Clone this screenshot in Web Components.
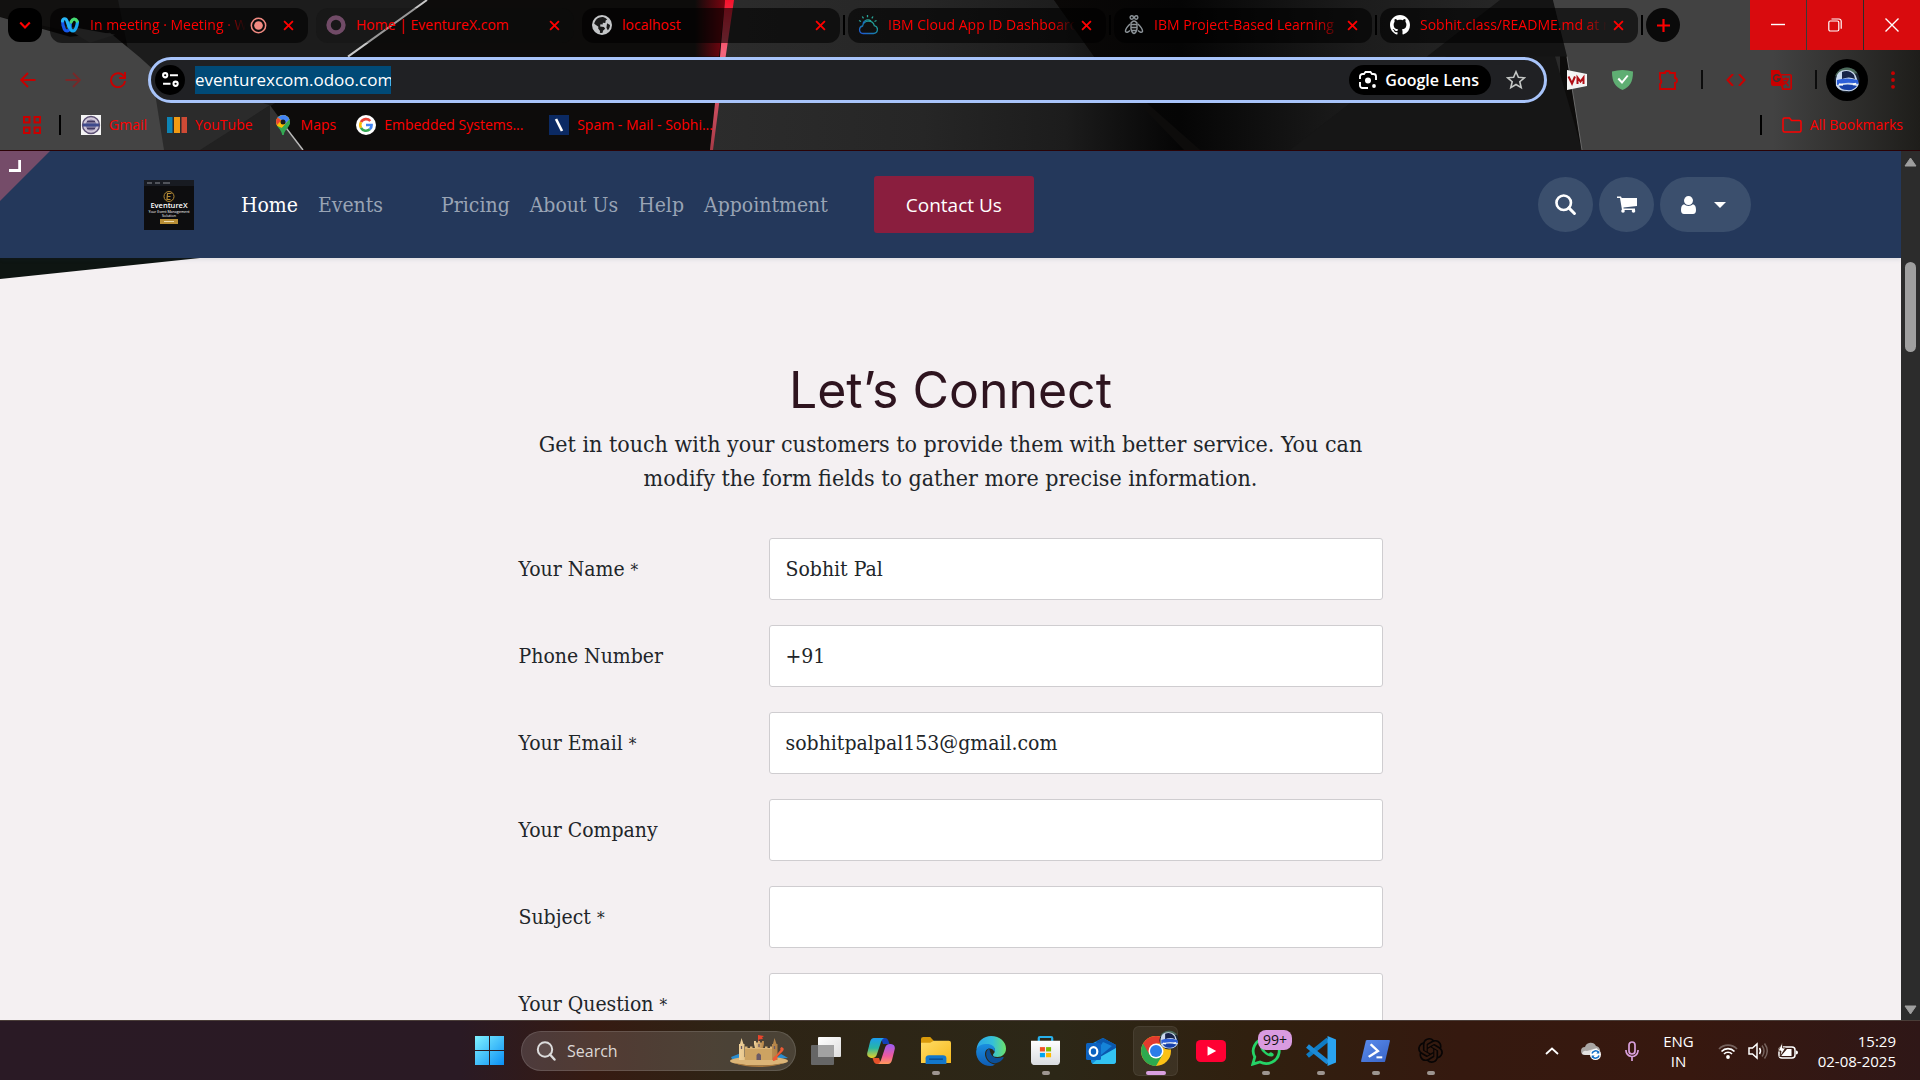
<!DOCTYPE html>
<html lang="en">
<head>
<meta charset="utf-8">
<title>Home | EventureX.com</title>
<style>
  html, body { margin: 0; height: 100%; }
  body { background: #000; font-family: "Open Sans", "Noto Sans", sans-serif; overflow: hidden; }
</style>
</head>
<body>
<desktop-shell></desktop-shell>
<script>
const RESET = `*{box-sizing:border-box}button,input,textarea{font:inherit;color:inherit;border:0;background:none;padding:0;margin:0;outline:0}a{color:inherit;text-decoration:none}svg{display:block}`;

function define(name, css, html) {
  const template = document.createElement('template');
  template.innerHTML = `<style>${RESET}${css}</style>${html}`;
  customElements.define(name, class extends HTMLElement {
    constructor() {
      super();
      this.attachShadow({ mode: 'open' }).append(template.content.cloneNode(true));
    }
  });
}

/* viewBox + drawing for every icon */
const ICONS = {
  chevron: ['0 0 10 10', '<path d="M1 3l4 4 4-4" fill="none" stroke="currentColor" stroke-width="1.8"/>'],
  x: ['0 0 10 10', '<path d="M1 1l8 8M9 1l-8 8" stroke="currentColor" stroke-width="1.7"/>'],
  plus: ['0 0 12 12', '<path d="M6 0v12M0 6h12" stroke="currentColor" stroke-width="2"/>'],
  webex: ['0 0 20 20', '<g fill="none" stroke-width="3.200" stroke-linecap="round"><path d="M2.500 6c.5 6 2 10 4.500 10s3-4 3.500-8" stroke="#1557ea"/><path d="M9.500 10c.5 4 1.500 6 3.500 6s4-4 4.500-9" stroke="#18a9f2"/><path d="M2.500 6c.5-3 3.500-3 4.500 0l2 6" stroke="#27b6f7"/><path d="M11 7c1.500-3.500 4.500-4 6-1" stroke="#46dc72"/></g>'],
  record: ['0 0 18 18', '<circle cx="9" cy="9" r="7.6" fill="none" stroke="#f28b82" stroke-width="1.6"/><circle cx="9" cy="9" r="4.6" fill="#f28b82"/>'],
  odooO: ['0 0 18 18', '<circle cx="9" cy="9" r="6.7" fill="none" stroke="#714b67" stroke-width="4"/>'],
  globe: ['0 0 18 18', '<circle cx="9" cy="9" r="9" fill="#c4c6c8"/><path d="M9 1.8C5 2 2.3 5 1.9 8.8L6 11v1.500l2 2v1.600c1 .2 2 0 2.600-.2V14l1.700-2-1.300-1.500H7.500V8.500h2V6.800h2.200V4.600l1.300-1.100A7 7 0 0 0 9 1.800z" fill="#1a1a1a" transform="rotate(8 9 9)"/><path d="M13.500 7.500l2.700 1.500c0 1.800-.8 3.600-2 4.800l-1.200-2.300z" fill="#1a1a1a"/>'],
  ibmcloud: ['0 0 20 20', '<defs><linearGradient id="ib" x1="0" y1="1" x2="1" y2="0"><stop offset="0" stop-color="#1f57d6"/><stop offset=".6" stop-color="#168a9e"/><stop offset="1" stop-color="#2fb58f"/></linearGradient></defs><g fill="none" stroke="url(#ib)" stroke-width="1.300"><path d="M5 18.500h10.500a4 4 0 0 0 .8-7.900 6 6 0 0 0-11.700.4A3.800 3.800 0 0 0 5 18.500z"/><path d="M5 8.500a5 5 0 0 1 8-2.500"/></g><g stroke="#2aa79a" stroke-width="1.300"><path d="M9.500 0v2.200M4.300 1.500l1.200 1.900M15 1.500l-1.200 1.900M1 5.500l2 1M18.500 5.500l-2 1"/></g>'],
  bee: ['0 0 20 20', '<g fill="none" stroke="#8d9499" stroke-width="1.400"><circle cx="7.800" cy="2.500" r="1.700"/><circle cx="12.200" cy="2.500" r="1.700"/><path d="M7 8q3-4 6 0v6q-1 4-3 4.500Q8 18 7 14zM7 9.500h6M7 12.500h6M7.500 15.500h5"/><path d="M6 9q-5 5-4.500 7.500Q3 18.500 6 15.500M14 9q5 5 4.500 7.500Q17 18.500 14 15.500"/></g>'],
  github: ['0 0 16 16', '<path fill="#fff" d="M8 0C3.580 0 0 3.580 0 8c0 3.540 2.290 6.530 5.470 7.590.4.070.550-.170.550-.380 0-.190-.010-.820-.010-1.490-2.010.370-2.530-.490-2.690-.940-.090-.230-.480-.940-.820-1.130-.280-.150-.680-.520-.010-.530.630-.010 1.080.580 1.230.820.720 1.210 1.870.870 2.330.660.070-.520.280-.870.510-1.070-1.780-.2-3.640-.890-3.640-3.950 0-.870.310-1.590.820-2.150-.080-.2-.360-1.020.080-2.120 0 0 .670-.210 2.200.820.640-.180 1.320-.270 2-.270s1.360.090 2 .270c1.530-1.040 2.200-.820 2.200-.820.440 1.100.160 1.920.080 2.120.510.560.820 1.270.820 2.150 0 3.070-1.870 3.750-3.650 3.950.290.250.540.730.540 1.480 0 1.070-.010 1.930-.010 2.200 0 .210.150.460.550.380A8 8 0 0 0 16 8c0-4.420-3.580-8-8-8z"/>'],
  min: ['0 0 14 14', '<path d="M0 6.500h14" stroke="#fff" stroke-width="1.400"/>'],
  restore: ['0 0 14 14', '<g fill="none" stroke="#fff" stroke-width="1.200"><rect x=".8" y="3" width="10" height="10" rx="1.500"/><path d="M3.500 1h7.500a2.200 2.200 0 0 1 2.200 2.200v7.500"/></g>'],
  winx: ['0 0 14 14', '<path d="M.5 .5l13 13M13.500 .5l-13 13" stroke="#fff" stroke-width="1.400"/>'],
  back: ['0 0 16 16', '<path d="M15.500 8H1.500M8 1L1 8l7 7" fill="none" stroke="currentColor" stroke-width="1.900"/>'],
  fwd: ['0 0 16 16', '<path d="M.5 8h14M8 1l7 7-7 7" fill="none" stroke="currentColor" stroke-width="1.900"/>'],
  reload: ['0 0 16 16', '<path d="M14 4.500A7 7 0 1 0 15 9" fill="none" stroke="currentColor" stroke-width="1.900"/><path d="M15 0v6H9" fill="none" stroke="currentColor" stroke-width="1.900"/>'],
  tune: ['0 0 16 16', '<g fill="none" stroke="#fff" stroke-width="1.900"><circle cx="3" cy="4" r="2"/><path d="M7.500 4H15M1 12h7"/><circle cx="12.800" cy="12" r="2"/></g>'],
  lens: ['0 0 18 18', '<g fill="none" stroke="#fff" stroke-width="1.900"><path d="M1 8V5.500A2.500 2.500 0 0 1 3.500 3H5l1.500-2h5L13 3h1.500A2.500 2.500 0 0 1 17 5.500V9M1 11v3.500A2.500 2.500 0 0 0 3.500 17H9"/></g><circle cx="9" cy="9.500" r="3" fill="#fff"/><circle cx="15" cy="15" r="1.900" fill="#fff"/>'],
  star: ['0 0 20 20', '<path d="M10 1.800l2.400 5.500 6 .5-4.600 3.900 1.400 5.900L10 14.500l-5.200 3.100 1.400-5.900L1.600 7.800l6-.5z" fill="none" stroke="#c4c7c5" stroke-width="1.600"/>'],
  vm: ['0 0 20 20', '<path d="M0 0l20 4v12L0 20z" fill="#f4f4f4"/><path d="M1.500 6.500l3.500 7 3-7M10.500 14V7.500l3 4 3-4V14" fill="none" stroke="#b10f16" stroke-width="2"/>'],
  shield: ['0 0 20 20', '<path d="M0 1.500Q10-1.500 20 1.500C20 12 17 17 10 20 3 17 0 12 0 1.500z" fill="#5fae73"/><path d="M6 8.500l3.500 4 5.500-7" fill="none" stroke="#fff" stroke-width="1.900"/>'],
  puzzle: ['0 0 20 20', '<path d="M2 3h5a2.500 2 0 0 1 5 0h5v5a2 2.500 0 0 1 0 5v6H2v-5a3 3 0 0 0 0-5z" fill="none" stroke="currentColor" stroke-width="1.900"/>'],
  code: ['0 0 20 12', '<path d="M7 0L1.500 6 7 12M13 0l5.500 6L13 12" fill="none" stroke="currentColor" stroke-width="2"/>'],
  translate: ['0 0 21 20', '<path d="M0 0h8l2 4h9a2 2 0 0 1 2 2v12a2 2 0 0 1-2 2h-8l-1-4H2a2 2 0 0 1-2-2z" fill="currentColor"/><path d="M10.500 5.500h8.800v12.800h-6.500l-.9-2.500 2-1.500z" fill="#444"/><path d="M8.500 6A3.300 3.300 0 1 0 9 9H6" fill="none" stroke="#333" stroke-width="1.400"/><path d="M12 9h6M15 7.500V9M17 9c-.6 2.500-2 4-4 5M13.500 11l4 5" fill="none" stroke="currentColor" stroke-width="1.300"/>'],
  train: ['0 0 26 26', '<defs><clipPath id="tc"><circle cx="13" cy="13" r="12.500"/></clipPath></defs><g clip-path="url(#tc)"><path d="M0 0h26v26H0z" fill="#1a2430"/><path d="M0 0h26v6L0 9z" fill="#4c6a5a"/><path d="M2 12Q3 3 12 3q9 0 11 9l2 6q-4 7-12 6-9 0-11-5z" fill="#c9d8ee"/><path d="M8 5q7-3 12 3l1 4q-6-3-13 0z" fill="#172348"/><path d="M3 13q9-3 21 0l.5 4Q12 14 3 18z" fill="#2d5fd8"/><path d="M5 19q8-3 18 0-4 5-10 4-6 0-8-4z" fill="#1740a8"/><path d="M5 17l4 1M19 17.500l3-1" stroke="#fff" stroke-width="1.600"/></g>'],
  dots: ['0 0 4 18', '<g fill="currentColor"><circle cx="2" cy="2.200" r="1.900"/><circle cx="2" cy="9" r="1.900"/><circle cx="2" cy="15.800" r="1.900"/></g>'],
  apps: ['0 0 18 18', '<g fill="none" stroke="currentColor" stroke-width="2"><rect x="1" y="1" width="5.500" height="5.500"/><rect x="11.500" y="1" width="5.500" height="5.500"/><rect x="1" y="11.500" width="5.500" height="5.500"/><rect x="11.500" y="11.500" width="5.500" height="5.500"/></g>'],
  college: ['0 0 20 20', '<path d="M0 0h20v20H0z" fill="#f5f5f5"/><circle cx="10" cy="10" r="8.500" fill="#cfc6d8" stroke="#5b4f74" stroke-width="1.400"/><circle cx="10" cy="10" r="5.500" fill="#8e86a8"/><path d="M2 8.500h16v3H2z" fill="#3f4a8c"/><path d="M6 6.500h8M6 13.500h8" stroke="#443a62" stroke-width="1.300"/>'],
  bars: ['0 0 20 16', '<path d="M0 0h5.500v16H0z" fill="#0d84b5"/><path d="M7 0h6v16H7z" fill="#f29a12"/><path d="M14.500 0H20v16h-5.500z" fill="#cf4a35"/>'],
  maps: ['-3 0 20 20', '<path d="M7 0a7 7 0 0 1 7 7c0 5-5.500 7-6.200 13H6.200C5.500 14 0 12 0 7a7 7 0 0 1 7-7z" fill="#34a853"/><path d="M7 0a7 7 0 0 1 6.500 4.500L6 13 1.300 11A7 7 0 0 1 0 7a7 7 0 0 1 7-7z" fill="#fbbc04"/><path d="M7 0a7 7 0 0 1 6.500 4.500L9 9 4 4 1.500 2.600A7 7 0 0 1 7 0z" fill="#4285f4"/><path d="M1.600 2.500L5 5.500 1 10A7 7 0 0 1 1.600 2.500z" fill="#ea4335"/><path d="M13.500 4.500A7 7 0 0 1 13 10.500L8 17l-3-3z" fill="#34a853"/><circle cx="7" cy="7" r="2.500" fill="#1a1a1a"/>'],
  google: ['0 0 20 20', '<circle cx="10" cy="10" r="10" fill="#fff"/><g fill="none" stroke-width="2.600"><path d="M14.300 6A5.700 5.700 0 0 0 5 7.200" stroke="#ea4335"/><path d="M5 7.200a5.700 5.700 0 0 0 0 5.600" stroke="#fbbc05"/><path d="M5 12.800a5.700 5.700 0 0 0 8.800 1.500" stroke="#34a853"/><path d="M13.800 14.300A5.500 5.500 0 0 0 15.600 10H10" stroke="#4285f4"/></g>'],
  slash: ['0 0 20 20', '<path d="M0 0h20v20H0z" fill="#0b2a63"/><path d="M7 4l6 12" stroke="#fff" stroke-width="2.600"/>'],
  folder: ['0 0 20 16', '<path d="M1 2.500A1.500 1.500 0 0 1 2.500 1H7.500l2 2.500h8A1.500 1.500 0 0 1 19 5v8.500a1.500 1.500 0 0 1-1.500 1.500h-15A1.500 1.500 0 0 1 1 13.500z" fill="none" stroke="currentColor" stroke-width="1.500"/>'],
  search: ['0 0 20 20', '<circle cx="8.300" cy="8.300" r="6.900" fill="none" stroke="currentColor" stroke-width="2.500"/><path d="M13.200 13.200l5.300 5.300" stroke="currentColor" stroke-width="2.800" stroke-linecap="round"/>'],
  cart: ['0 0 20 17', '<path d="M0 .5h4l.7 1.500H20v8L6.500 11.500v1H18v1.500H5L3 2H0z" fill="currentColor"/><circle cx="6" cy="15" r="1.800" fill="currentColor"/><circle cx="16.500" cy="15" r="1.800" fill="currentColor"/>'],
  user: ['0 0 15 18', '<circle cx="7.500" cy="4.600" r="4.500" fill="currentColor"/><path d="M3 8.300a6.500 6.500 0 0 0 9 0c2 .5 3 2.500 3 5.700 0 2.500-1 4-3 4H3c-2 0-3-1.500-3-4 0-3.200 1-5.200 3-5.700z" fill="currentColor"/>'],
  caret: ['0 0 12 6', '<path d="M0 0h12L6 6z" fill="currentColor"/>'],
  windows: ['0 0 29 29', '<defs><linearGradient id="wn" gradientUnits="userSpaceOnUse" x1="0" y1="0" x2="29" y2="29"><stop offset="0" stop-color="#80f2ff"/><stop offset="1" stop-color="#0a8ff5"/></linearGradient></defs><path d="M0 0h14v14H0zM15 0h14v14H15zM0 15h14v14H0zM15 15h14v14H15z" fill="url(#wn)"/>'],
  find: ['0 0 20 20', '<circle cx="9" cy="8.500" r="7.200" fill="#ffffff18" stroke="#dcdcdc" stroke-width="2"/><path d="M14 13.500l4.500 5" stroke="#dcdcdc" stroke-width="2.400" stroke-linecap="round"/>'],
  castle: ['0 0 60 32', '<defs><linearGradient id="cs" x1="0" x2="1"><stop offset="0" stop-color="#f0d29a"/><stop offset="1" stop-color="#b08043"/></linearGradient></defs><path d="M2 22l10-4 4 6H3zM46 24l6-5 7 4z" fill="#2a8dd0"/><ellipse cx="30" cy="26" rx="29" ry="4.500" fill="#dcb577"/><path d="M5 28q25 5 50 0-10 4-25 4T5 28z" fill="#a9783c"/><path d="M16 13h28v12H16z" fill="#cda362"/><path d="M16 14v-2.500h2.500V13H21v-1.500h2.500V13H26v-1.500h2.500V13H31v-1.500h2.500V13H36v-1.500h2.500V13H41v-1.500h3V14z" fill="#dcb577"/><path d="M10 9h1l1.500-6L14.500 9h1v16h-5.500zM43 9h1l1.500-6L47.500 9h1v16H43z" fill="url(#cs)"/><path d="M25 6h2v1.500h2V6h2v1.500h2V6h2v3l-1 4h-8l-1-4z" fill="url(#cs)"/><path d="M27.500 25v-5q2-3.500 4.500 0v5z" fill="#6b5a66"/><path d="M30 9v3M12.500 11v3M45.500 11v3" stroke="#6b5a66" stroke-width="1.300"/><path d="M29 6V0l6 1-2 1.500 1 1.500-4.300.5V6z" fill="#e8452c"/><path d="M52.500 12q3.500 1 1.500 4l-6 6q1 3-4 4-1-4 2.500-5l5-6q-1-2 1-3z" fill="#ee5a34"/>'],
  taskview: ['0 0 30 28', '<defs><linearGradient id="tv" x1="0" y1="0" x2="1" y2="1"><stop offset="0" stop-color="#fff"/><stop offset="1" stop-color="#dedede"/></linearGradient></defs><rect x="7" y="0" width="23" height="20" rx="1" fill="url(#tv)"/><rect x="0" y="8" width="23" height="20" rx="1" fill="#666"/><path d="M7 8h16v12H7z" fill="#a2a2a2"/>'],
  copilot: ['0 0 28 26', '<defs><linearGradient id="c1" x1="0" y1="0" x2="0" y2="1"><stop offset="0" stop-color="#1b9cf0"/><stop offset=".5" stop-color="#28b6a4"/><stop offset="1" stop-color="#e9cf24"/></linearGradient><linearGradient id="c2" x1="0" y1="0" x2="0" y2="1"><stop offset="0" stop-color="#9a5cf5"/><stop offset=".6" stop-color="#f05a9c"/><stop offset="1" stop-color="#ff9a5c"/></linearGradient></defs><path d="M14 0h4q2.500 0 3.500 3l1 3H16z" fill="#1440b8"/><path d="M7 0h10q-2 1-3 4l-4 12q-1 4-5 4H4q-5-1-3.500-6L3 4q1-4 4-4z" fill="url(#c1)"/><path d="M14 26h-4q-2.500 0-3.500-3l-1-3H12z" fill="#e5512a"/><path d="M21 26H11q2-1 3-4l4-12q1-4 5-4h1q5 1 3.500 6L25 22q-1 4-4 4z" fill="url(#c2)"/>'],
  explorer: ['0 0 26 28', '<defs><linearGradient id="ex" x1="0" y1="0" x2="1" y2="1"><stop offset="0" stop-color="#ffdc66"/><stop offset="1" stop-color="#f7b91c"/></linearGradient></defs><path d="M0 2q0-2 2-2h6l3 4v5H0z" fill="#d99a0b"/><path d="M0 6l8 0 3-2h13q2 0 2 2v21H0z" fill="url(#ex)"/><path d="M4 28v-6q0-3 3-3h12q3 0 3 3v6z" fill="#1277cc"/><path d="M7 23h12" stroke="#0a5093" stroke-width="1.600"/>'],
  edge: ['0 0 30 30', '<defs><linearGradient id="e1" x1="0" x2="1"><stop offset="0" stop-color="#2aa6e8"/><stop offset=".55" stop-color="#35c0d8"/><stop offset="1" stop-color="#6be26a"/></linearGradient><linearGradient id="e2" x1="0" y1="0" x2="0" y2="1"><stop offset="0" stop-color="#1a8ee0"/><stop offset="1" stop-color="#0f5cb4"/></linearGradient></defs><path d="M.5 13C1.500 5 8 0 15 0c9 0 15 6 15 12.500C30 18 26 21 21.500 21c-3.500 0-4.500-1-4.500-2 0-1.500 2-2 2-4.500 0-3-3-5-6.500-5-5 0-9 1-12 3.500z" fill="url(#e1)"/><path d="M.2 15C1 9.500 6 8 11 8c4.500 0 8 2.500 8 6 0 .8-.2 1.500-.5 2-1-2.500-3-3.500-5-3.500-3.500 0-5.500 4-4 8.500S15 28 19 28.500C17.500 29.500 16 30 14.500 30 6 30-.500 23 .2 15z" fill="url(#e2)"/><path d="M13 12.500c-2.500 1.500-3.500 4.500-2.500 8 1.500 5 6 7.500 10 6.500 3-.7 5.500-2.500 7-5 .3-1-.3-1.300-1-1-4 2-9 1.300-11-2-1.500-2.500-1.500-5-2.500-6.500z" fill="#0c4f97"/>'],
  store: ['0 0 26 30', '<defs><linearGradient id="st" x1="0" y1="0" x2="0" y2="1"><stop offset="0" stop-color="#fff"/><stop offset="1" stop-color="#d9dce0"/></linearGradient></defs><path d="M7 6V2q0-1 1-1h10q1 0 1 1v4" fill="none" stroke="#27b0ea" stroke-width="2"/><path d="M0 5h26v21q0 4-4 4H4q-4 0-4-4z" fill="url(#st)"/><path d="M8 11.500h4.500V16H8z" fill="#f25022"/><path d="M13.500 11.500H18V16h-4.500z" fill="#7fba00"/><path d="M8 17.500h4.500V22H8z" fill="#00a4ef"/><path d="M13.500 17.500H18V22h-4.500z" fill="#ffb900"/>'],
  outlook: ['0 0 30 26', '<path d="M5 6L17 0l13 7v16q0 3-3 3H8q-3 0-3-3z" fill="#1490df"/><path d="M10 3.500L17 0l13 7v3L15 20z" fill="#0a57ae"/><path d="M30 10v13q0 3-3 3H6l8-7z" fill="#33c3f2"/><path d="M17 4l9 4-11 9V7z" fill="#1583d8"/><rect y="5" width="15" height="17" rx="1.500" fill="#0d62c0"/><ellipse cx="7.500" cy="13.500" rx="3.800" ry="4.400" fill="none" stroke="#fff" stroke-width="2.200"/>'],
  chrome: ['0 0 28 28', '<circle cx="14" cy="14" r="14" fill="#fbc116"/><path d="M1.900 7A14 14 0 0 0 14 28l6.100-10.500L14 14z" fill="#2da94f"/><path d="M1.900 7A14 14 0 0 1 26.100 7H14l-6 10.500z" fill="#e33b2e"/><circle cx="14" cy="14" r="7" fill="#fff"/><circle cx="14" cy="14" r="5.600" fill="#2b7de9"/>'],
  youtube: ['0 0 26 21', '<rect width="26" height="21" rx="4" fill="#ff0033"/><path d="M10 6l7.500 4.500L10 15z" fill="#fff"/>'],
  whatsapp: ['0 0 30 30', '<path d="M1.800 28.200l2-7.200A13 12.500 0 1 1 9 26z" fill="none" stroke="#25d366" stroke-width="2.800"/><path d="M10 8c-2 2-1 5 2.500 8.500s7.500 5 9.500 3.500c1.500-1.500.5-2.500-1.500-3.500-1.500-.8-1.800 1-3 1-1.500-.5-4-3-4.500-4.500 0-1 1.500-1.500 1-3s-2-3-4-2z" fill="#25d366"/>'],
  vscode: ['0 0 30 30', '<path d="M22 3.500L1.500 20" stroke="#0f7cc4" stroke-width="4.600"/><path d="M1.500 10L22 26.500" stroke="#1b8ad6" stroke-width="4.600"/><path d="M21.500 0L30 3.500v23L21.500 30z" fill="#2aa3f0"/>'],
  powershell: ['0 0 30 26', '<defs><linearGradient id="ps" x1="0" y1="0" x2="1" y2="1"><stop offset="0" stop-color="#5b8def"/><stop offset="1" stop-color="#3863c4"/></linearGradient></defs><path d="M5 1Q5.300 0 6.500 0H29q1.200 0 1 1l-5 24q-.3 1-1.500 1H1q-1.200 0-1-1z" fill="url(#ps)"/><path d="M10 5l7.500 8L8 20" fill="none" stroke="#fff" stroke-width="2.600"/><path d="M16 20.500h6" stroke="#fff" stroke-width="2.400"/>'],
  openai: ['0 0 24 24', '<path fill="#080505" d="M22.2819 9.8211a5.9847 5.9847 0 0 0-.5157-4.9108 6.0462 6.0462 0 0 0-6.5098-2.9A6.0651 6.0651 0 0 0 4.9807 4.1818a5.9847 5.9847 0 0 0-3.9977 2.9 6.0462 6.0462 0 0 0 .7427 7.0966 5.98 5.98 0 0 0 .511 4.9107 6.051 6.051 0 0 0 6.5146 2.9001A5.9847 5.9847 0 0 0 13.2599 24a6.0557 6.0557 0 0 0 5.7718-4.2058 5.9894 5.9894 0 0 0 3.9977-2.9001 6.0557 6.0557 0 0 0-.7475-7.0729zm-9.022 12.6081a4.4755 4.4755 0 0 1-2.8764-1.0408l.1419-.0804 4.7783-2.7582a.7948.7948 0 0 0 .3927-.6813v-6.7369l2.02 1.1686a.071.071 0 0 1 .038.052v5.5826a4.504 4.504 0 0 1-4.4945 4.4944zm-9.6607-4.1254a4.4708 4.4708 0 0 1-.5346-3.0137l.142.0852 4.783 2.7582a.7712.7712 0 0 0 .7806 0l5.8428-3.3685v2.3324a.0804.0804 0 0 1-.0332.0615L9.74 19.9502a4.4992 4.4992 0 0 1-6.1408-1.6464zM2.3408 7.8956a4.485 4.485 0 0 1 2.3655-1.9728V11.6a.7664.7664 0 0 0 .3879.6765l5.8144 3.3543-2.0201 1.1685a.0757.0757 0 0 1-.071 0l-4.8303-2.7865A4.504 4.504 0 0 1 2.3408 7.872zm16.5963 3.8558L13.1038 8.364 15.1192 7.2a.0757.0757 0 0 1 .071 0l4.8303 2.7913a4.4944 4.4944 0 0 1-.6765 8.1042v-5.6772a.79.79 0 0 0-.407-.667zm2.0107-3.0231l-.142-.0852-4.7735-2.7818a.7759.7759 0 0 0-.7854 0L9.409 9.2297V6.8974a.0662.0662 0 0 1 .0284-.0615l4.8303-2.7866a4.4992 4.4992 0 0 1 6.6802 4.66zM8.3065 12.863l-2.02-1.1638a.0804.0804 0 0 1-.038-.0567V6.0742a4.4992 4.4992 0 0 1 7.3757-3.4537l-.142.0805L8.704 5.459a.7948.7948 0 0 0-.3927.6813zm1.0976-2.3654l2.602-1.4998 2.6069 1.4998v2.9994l-2.5974 1.4997-2.6067-1.4997Z"/>'],
  up: ['0 0 14 8', '<path d="M1 7l6-5.500L13 7" fill="none" stroke="#fff" stroke-width="1.800"/>'],
  cloud: ['0 0 20 18', '<path d="M4 13a4 4 0 0 1 0-8 6 6 0 0 1 11-1 5 5 0 0 1 2 9z" fill="#a9a6a4"/><path d="M1 12q1-4 5-3l10-3 2 7H4z" fill="#e4e2e1"/><circle cx="14.500" cy="12.500" r="5.500" fill="#fff"/><path d="M11 11.500a3.600 3.600 0 0 1 6.500-1M18 13.500a3.600 3.600 0 0 1-6.500 1" fill="none" stroke="#1470c8" stroke-width="1.500"/><path d="M18.300 8.500v3h-3zM10.700 16.500v-3h3z" fill="#1470c8"/>'],
  mic: ['0 0 14 20', '<g fill="none" stroke="#d9a0dd" stroke-width="1.700"><rect x="4" y="1" width="6" height="12" rx="3"/><path d="M1 9a6 6 0 0 0 12 1V9M7 16v4"/></g>'],
  wifi: ['0 0 20 16', '<g fill="none" stroke-width="1.700"><path d="M1 6a12.500 12.500 0 0 1 18 0" stroke="#75625d"/><path d="M3.500 8.500a9 9 0 0 1 13 0M6 11a5.500 5.500 0 0 1 8 0" stroke="#fff"/></g><circle cx="10" cy="14" r="1.900" fill="#fff"/>'],
  volume: ['0 0 20 18', '<path d="M1 6h3.500L9 2v14l-4.500-4H1z" fill="none" stroke="#fff" stroke-width="1.500"/><path d="M11.500 6q2 3 0 6" fill="none" stroke="#fff" stroke-width="1.500"/><path d="M14 3.500q4 5.500 0 11M16.500 1.500q5.500 7.500 0 15" fill="none" stroke="#75625d" stroke-width="1.500"/>'],
  battery: ['0 0 20 18', '<rect x="1" y="5" width="16" height="11" rx="3" fill="none" stroke="#fff" stroke-width="1.500"/><path d="M18 8.500q2 0 2 2t-2 2z" fill="#fff"/><path d="M3 14l6-7h4.500v7z" fill="#fff"/><path d="M4.500 0L0 9h3l-1 6 5.500-9H4.500z" fill="#fff" stroke="#35190f" stroke-width=".8"/>'],
  corner: ['0 0 13 12', '<path d="M11.500 0v10.500H0" fill="none" stroke="#fff" stroke-width="3"/>'],
  tri: ['0 0 13 10', '<path d="M6.500 1l5.500 8H1z" fill="#9f9f9f" stroke="#9f9f9f" stroke-linejoin="round"/>'],
  logo: ['0 0 50 50', '<path d="M0 0h50v50H0z" fill="#0d0d0f"/><path d="M0 0h50v6H0z" fill="#181b22"/><path d="M3 3h5M11 3h5M19 3h7" stroke="#8a8d94" stroke-width="1.200"/><g font-family="Open Sans, sans-serif" fill="#fff" text-anchor="middle"><text x="25" y="28" font-size="7.500" font-weight="600">EventureX</text><text x="25" y="33" font-size="3.600">Your Event Management</text><text x="25" y="37" font-size="3.600">Solution</text></g><circle cx="25" cy="16.500" r="5" fill="none" stroke="#b58a35"/><path d="M27.500 13.500h-4l-.5 6h3.500M23 16.500h3.500" fill="none" stroke="#b58a35" stroke-width="1.200"/><path d="M16 39h18v5H16z" fill="#b98e35"/><path d="M20 41.500h10" stroke="#eedcae"/>']
};

customElements.define('ui-icon', class extends HTMLElement {
  connectedCallback() {
    if (this.shadowRoot) return;
    const [box, art] = ICONS[this.getAttribute('name')];
    const w = this.getAttribute('w') || 20, h = this.getAttribute('h') || w;
    this.attachShadow({ mode: 'open' }).innerHTML =
      `<style>:host{display:block;flex:none}svg{display:block}</style><svg width="${w}" height="${h}" viewBox="${box}" preserveAspectRatio="none" aria-hidden="true">${art}</svg>`;
  }
});

/* ---------- browser chrome ---------- */
define('theme-art', `:host{display:block;overflow:hidden}svg{width:100%;height:100%}`, `
<svg viewBox="0 0 1920 151" preserveAspectRatio="none" aria-hidden="true">
  <defs>
    <linearGradient id="g1" x1="0" x2="1"><stop offset="0" stop-color="#2c2c2c"/><stop offset=".45" stop-color="#262626"/><stop offset=".75" stop-color="#1c1c1c"/><stop offset="1" stop-color="#040404"/></linearGradient>
    <linearGradient id="g2" x1="0" x2="1"><stop offset="0" stop-color="#0a0807"/><stop offset=".25" stop-color="#050505"/><stop offset=".6" stop-color="#1c1c1c"/><stop offset="1" stop-color="#2a2a2a"/></linearGradient>
    <linearGradient id="g3" x1="0" x2="1"><stop offset="0" stop-color="#424242"/><stop offset=".6" stop-color="#424242"/><stop offset="1" stop-color="#1e1d1a"/></linearGradient>
    <linearGradient id="glow" x1="0" x2="1"><stop offset="0" stop-color="#a00010" stop-opacity="0"/><stop offset="1" stop-color="#a00010" stop-opacity=".75"/></linearGradient>
    <linearGradient id="red" x1="0" y1="0" x2="0" y2="1"><stop offset="0" stop-color="#f5122c"/><stop offset=".35" stop-color="#f4647c"/><stop offset="1" stop-color="#a83a46"/></linearGradient>
  </defs>
  <path d="M0 0h1920v151H0z" fill="#0d0c0b"/>
  <path d="M0 0h250L120 42 0 17z" fill="#121110"/>
  <path d="M118 0h309l-78 57-79 50 33 44H163L130 60z" fill="#1c1c1c"/>
  <path d="M150 68l120 38-68 45h-39z" fill="#2b2b2b"/>
  <path d="M270 106l33 45h-34z" fill="#333"/>
  <path d="M270 106l-70 45h70z" fill="#212121"/>
  <path d="M0 17l70 20 40-4 30 25 11 10 13 83H0z" fill="#444"/>
  <path d="M60 25l55 10-25 8z" fill="#505050"/>
  <path d="M427 0l-79 57" stroke="#c8c8c8" stroke-width="2"/>
  <path d="M284 126l19 25" stroke="#bbb" stroke-width="1.500"/>
  <path d="M729 0h325l40 57 90 94H710z" fill="url(#g1)"/>
  <path d="M1054 0h506v151H1200L1094 57z" fill="url(#g2)"/>
  <path d="M1355 100l-65 51h292l-40-140z" fill="#161616"/>
  <path d="M1500 0h53l14 57h-140z" fill="#141414"/>
  <path d="M1553 0h367v151h-338l-15-94z" fill="url(#g3)"/>
  <path d="M1567 57l15 94" stroke="#6a6a6a"/>
  <path d="M695 0h30l-6 57h-24z" fill="url(#glow)"/>
  <path d="M725 0h9l-12 82-9 69h-3l10-94z" fill="url(#red)"/>
</svg>`);

define('browser-tab', `
:host{display:flex;align-items:center;flex:0 1 258px;min-width:0;height:35px;padding:0 14px 0 10px;border-radius:12px;background:#0009;color:#f00;font-size:14px}
:host([active]){background:#0d0c0b40}
a{flex:1;min-width:0;margin-left:10px;white-space:nowrap;overflow:hidden;line-height:20px;-webkit-mask:linear-gradient(90deg,#000 calc(100% - 24px),transparent)}
:host([short]) a{-webkit-mask:none}
button{display:flex;padding:0;margin-left:6px}
::slotted([slot=end]){margin:0 10px 0 4px}`,
`<slot name="icon"></slot><a href="#"><slot></slot></a><slot name="end"></slot><button aria-label="Close tab"><ui-icon name="x" w="11"></ui-icon></button>`);

define('tab-strip', `
:host{display:flex;height:50px;padding-left:8px}
.tabs{display:flex;align-items:center;flex:1;min-width:0;gap:8px}
.round{display:flex;flex:none;width:34px;height:34px;border-radius:12px;background:#000;color:#f00;align-items:center;justify-content:center}
.add{border-radius:50%;background:#0a0a0a}
.cut{width:2px;height:20px;background:#000;margin:0 -5px;flex:none}
.win{display:flex;gap:1px;flex:none}
.win button{width:56px;height:50px;background:#d90b0e;display:flex;align-items:center;justify-content:center}
`, `
<div class="tabs">
  <button class="round" aria-label="Search tabs"><ui-icon name="chevron" w="12"></ui-icon></button>
  <browser-tab><ui-icon slot="icon" name="webex" w="20"></ui-icon>In meeting · Meeting · Webex<ui-icon slot="end" name="record" w="17"></ui-icon></browser-tab>
  <browser-tab active short><ui-icon slot="icon" name="odooO" w="20"></ui-icon>Home | EventureX.com</browser-tab>
  <browser-tab short><ui-icon slot="icon" name="globe" w="20"></ui-icon>localhost</browser-tab>
  <span class="cut"></span>
  <browser-tab><ui-icon slot="icon" name="ibmcloud" w="20"></ui-icon>IBM Cloud App ID Dashboard</browser-tab>
  <span class="cut"></span>
  <browser-tab><ui-icon slot="icon" name="bee" w="20"></ui-icon>IBM Project-Based Learning</browser-tab>
  <span class="cut"></span>
  <browser-tab><ui-icon slot="icon" name="github" w="20"></ui-icon>Sobhit.class/README.md at main</browser-tab>
  <span class="cut"></span>
  <button class="round add" aria-label="New tab"><ui-icon name="plus" w="13"></ui-icon></button>
</div>
<div class="win"><button aria-label="Minimize"><ui-icon name="min" w="14"></ui-icon></button><button aria-label="Restore"><ui-icon name="restore" w="14"></ui-icon></button><button aria-label="Close"><ui-icon name="winx" w="14"></ui-icon></button></div>`);

define('tool-bar', `
:host{display:flex;align-items:center;height:59px;padding:0 25px 0 20px;color:#c80000}
button{display:flex;align-items:center;justify-content:center;flex:none}
.nav{display:flex;gap:29px;margin-right:22px}
.nav .off{opacity:.4}
.omni{flex:1;min-width:0;height:46px;border:3px solid #a8c4fa;border-radius:23px;background:#202124;display:flex;align-items:center;padding:0 18px 0 4px}
.tune{width:30px;height:30px;border-radius:50%;background:#000;margin-right:10px}
input{width:196px;height:28px;background:#004a77;color:#fff;font-size:17px}
.gap{flex:1}
.lens{height:30px;border-radius:15px;background:#000;color:#fff;font-weight:600;font-size:16px;padding:0 12px 0 10px;gap:8px;margin-right:15px}
.ext{display:flex;align-items:center;gap:25px;margin-left:20px}
.bar{width:2px;height:19px;background:#0c0c0c;margin:0 -2px}
.me{width:42px;height:42px;border-radius:50%;background:#000}
.ext .bar+.me{margin:0 -2px 0 -14px}
`, `
<div class="nav"><button aria-label="Back"><ui-icon name="back" w="16"></ui-icon></button><button class="off" aria-label="Forward"><ui-icon name="fwd" w="16"></ui-icon></button><button aria-label="Reload"><ui-icon name="reload" w="16"></ui-icon></button></div>
<div class="omni"><button class="tune" aria-label="Site information"><ui-icon name="tune" w="17"></ui-icon></button><input aria-label="Address" value="eventurexcom.odoo.com"><span class="gap"></span><button class="lens"><ui-icon name="lens" w="18"></ui-icon>Google Lens</button><button aria-label="Bookmark this tab"><ui-icon name="star" w="20"></ui-icon></button></div>
<div class="ext"><button aria-label="VM extension"><ui-icon name="vm" w="20"></ui-icon></button><button aria-label="AdGuard"><ui-icon name="shield" w="21" h="20"></ui-icon></button><button aria-label="Extensions"><ui-icon name="puzzle" w="20"></ui-icon></button><span class="bar"></span><button aria-label="Code"><ui-icon name="code" w="20" h="12"></ui-icon></button><button aria-label="Translate"><ui-icon name="translate" w="21" h="20"></ui-icon></button><span class="bar"></span><button class="me" aria-label="Profile"><ui-icon name="train" w="26"></ui-icon></button><button aria-label="Menu"><ui-icon name="dots" w="4" h="18"></ui-icon></button></div>`);

define('book-mark', `:host{display:block;color:#f00;font-size:14px}:host([long]){min-width:173px}a{display:flex;align-items:center;gap:8px;line-height:20px;white-space:nowrap}`,
`<a href="#"><slot name="icon"></slot><slot></slot></a>`);

define('bookmark-bar', `
:host{display:flex;align-items:center;height:32px;padding:0 17px 0 23px;gap:20px;color:#c80000}
.bar{width:2px;height:20px;background:#000}
.gap{flex:1}.r{display:flex;align-items:center;gap:20px}
.l{display:flex;align-items:center;gap:18px}`, `
<div class="l"><button aria-label="Apps"><ui-icon name="apps" w="18"></ui-icon></button><span class="bar"></span></div>
<book-mark><ui-icon slot="icon" name="college" w="20"></ui-icon>Gmail</book-mark>
<book-mark><ui-icon slot="icon" name="bars" w="20" h="16"></ui-icon>YouTube</book-mark>
<book-mark><ui-icon slot="icon" name="maps" w="20"></ui-icon>Maps</book-mark>
<book-mark long><ui-icon slot="icon" name="google" w="20"></ui-icon>Embedded Systems...</book-mark>
<book-mark long><ui-icon slot="icon" name="slash" w="20"></ui-icon>Spam - Mail - Sobhi...</book-mark>
<span class="gap"></span>
<div class="r"><span class="bar"></span><book-mark><ui-icon slot="icon" name="folder" w="20" h="16"></ui-icon>All Bookmarks</book-mark></div>`);

define('browser-chrome', `
:host{display:grid;height:151px;flex:none;border-bottom:1px solid #2a0205;overflow:hidden}
theme-art,.rows{grid-area:1/1;min-width:0;min-height:0}
.rows{display:flex;flex-direction:column}`,
`<theme-art></theme-art><div class="rows"><tab-strip></tab-strip><tool-bar></tool-bar><bookmark-bar></bookmark-bar></div>`);

/* ---------- web page ---------- */
define('site-nav', `
:host{display:flex;align-items:center;height:107px;background:#24385b;padding:0 150px 0 144px;color:#fff;position:relative;z-index:1;box-shadow:0 2px 4px #24385b18;font-family:"DejaVu Serif Condensed","DejaVu Serif",serif}
.corner{position:absolute;left:0;top:0;width:50px;height:50px;background:#754c69;clip-path:polygon(0 0,100% 0,0 100%);padding:9px}
nav{display:flex;align-items:center;gap:20px;margin-left:47px;font-size:21px;color:#99a4b5;white-space:nowrap}
.on{color:#fff}.sp{margin-right:38px}
.cta{margin-left:46px;height:57px;width:160px;border-radius:3px;background:#8a1e3e;font-family:"Open Sans",sans-serif;font-size:19px;white-space:nowrap}
.acts{display:flex;gap:6px;margin-left:auto}
.acts button{height:55px;min-width:55px;border-radius:28px;background:#3b4f6d;display:flex;align-items:center;justify-content:center;gap:18px}
.acts .wide{width:91px;padding-right:5px}`, `
<div class="corner"><ui-icon name="corner" w="12"></ui-icon></div>
<a href="#" aria-label="EventureX"><ui-icon name="logo" w="50"></ui-icon></a>
<nav><a class="on" href="#">Home</a><a class="sp" href="#">Events</a><a href="#">Pricing</a><a href="#">About Us</a><a href="#">Help</a><a href="#">Appointment</a></nav>
<button class="cta">Contact Us</button>
<div class="acts"><button aria-label="Search"><ui-icon name="search" w="21"></ui-icon></button><button aria-label="Cart"><ui-icon name="cart" w="20" h="17"></ui-icon></button><button class="wide" aria-label="Account"><ui-icon name="user" w="15" h="18"></ui-icon><ui-icon name="caret" w="12" h="6"></ui-icon></button></div>`);

customElements.define('form-field', class extends HTMLElement {
  connectedCallback() {
    if (this.shadowRoot) return;
    const root = this.attachShadow({ mode: 'open' });
    const type = this.getAttribute('type') || 'text';
    const star = this.hasAttribute('required') ? ' <span>*</span>' : '';
    const control = type === 'textarea' ? '<textarea id="c"></textarea>' : `<input id="c" type="${type}">`;
    root.innerHTML = `<style>${RESET}
      :host{display:flex;align-items:flex-start;font-size:21px;color:#212529}
      label{width:250px;flex:none;line-height:62px}span{font-size:17px;line-height:20px}
      input,textarea{flex:1;min-width:0;height:62px;border:1px solid #cfcdd0;border-radius:3px;background:#fff;padding:0 16px}
      textarea{height:160px;padding:16px;resize:none}
    </style><label for="c">${this.getAttribute('label')}${star}</label>${control}`;
    root.getElementById('c').value = this.getAttribute('value') || '';
  }
});

define('contact-section', `
:host{display:block;background:#f4f0f2;color:#212529;font-family:"DejaVu Serif Condensed","DejaVu Serif",serif}
.slant{width:200px;height:21px;background:#0e1512;clip-path:polygon(0 0,100% 0,0 100%)}
.in{max-width:864px;margin:0 auto;padding-top:78px}
h2{margin:0;text-align:center;font:400 50px/66px Inter,sans-serif;color:#2e141f}
p{margin:4px 0 43px;text-align:center;font-size:23px;line-height:34px}
form{display:flex;flex-direction:column;gap:25px}`, `
<div class="slant"></div>
<div class="in"><h2>Let’s Connect</h2>
<p>Get in touch with your customers to provide them with better service. You can modify the form fields to gather more precise information.</p>
<form>
<form-field label="Your Name" required value="Sobhit Pal"></form-field>
<form-field label="Phone Number" type="tel" value="+91"></form-field>
<form-field label="Your Email" required type="email" value="sobhitpalpal153@gmail.com"></form-field>
<form-field label="Your Company"></form-field>
<form-field label="Subject" required></form-field>
<form-field label="Your Question" required type="textarea"></form-field>
</form></div>`);

define('scroll-rail', `
:host{display:flex;flex-direction:column;align-items:center;width:19px;flex:none;background:#2c2c2c;padding:6px 0 5px}
.thumb{width:11px;height:90px;border-radius:6px;background:#9f9f9f;margin-top:95px}
.gap{flex:1}.dn{transform:rotate(180deg)}`,
`<ui-icon name="tri" w="13" h="10"></ui-icon><div class="thumb"></div><div class="gap"></div><ui-icon class="dn" name="tri" w="13" h="10"></ui-icon>`);

define('page-view', `
:host{display:flex;flex:1;min-height:0;overflow:hidden}
main{flex:1;min-width:0;overflow:hidden;background:#f4f0f2}`,
`<main><site-nav></site-nav><contact-section></contact-section></main><scroll-rail></scroll-rail>`);

/* ---------- taskbar ---------- */
define('task-app', `
:host{display:block;width:45px;flex:none}
button{position:relative;width:45px;height:50px;border-radius:6px;display:flex;align-items:center;justify-content:center}
:host([active]) button{background:#ffffff12;box-shadow:inset 0 0 0 1px #ffffff10}
i{position:absolute;left:19px;bottom:1px;width:8px;height:4px;border-radius:2px;background:#9d9590;display:none}
:host([open]) i{display:block}
:host([active]) i{display:block;left:13px;width:20px;background:#d9a0e0}
::slotted([slot=badge]){position:absolute;left:26px;top:4px}
::slotted(b){left:15px!important;width:34px;height:20px;border-radius:8px;background:#d99be0;color:#111;font:400 14px/20px "Open Sans",sans-serif}`,
`<button><slot></slot><slot name="badge"></slot><i></i></button>`);

define('task-bar', `
:host{display:flex;align-items:center;flex:none;height:60px;border-top:1px solid #4a3d38;color:#fff;background:linear-gradient(90deg,#2a1a25 0,#2a1a24 24%,#361b12 31%,#2e2415 38%,#2c2717 55%,#30200f 65%,#35190f 76%,#37180f 88%,#2f1717 100%);padding:0 24px 0 467px;box-sizing:border-box}
.apps{display:flex;align-items:center;gap:10px}
.find{display:flex;align-items:center;width:275px;height:40px;border-radius:20px;background:#ffffff24;box-shadow:inset 0 0 0 1px #ffffff20;padding:0 7px 0 15px;margin:0 -3px 0 -1px}
.find input{flex:1;min-width:0;margin-left:11px;font-size:16px;color:#dcd8d6}
.find input::placeholder{color:#dcd8d6;opacity:1}
.tray{display:flex;align-items:center;margin-left:auto;font-size:15px;line-height:20px;text-align:center}
.tray>*{flex:none}.g1{margin-left:22px}.g2{margin-left:24px}.g3{margin-left:10px}
.clock{text-align:right;margin-left:20px}`, `
<div class="apps">
<task-app><ui-icon name="windows" w="29"></ui-icon></task-app>
<label class="find"><ui-icon name="find" w="20"></ui-icon><input aria-label="Search" placeholder="Search"><ui-icon name="castle" w="60" h="32"></ui-icon></label>
<task-app><ui-icon name="taskview" w="30" h="28"></ui-icon></task-app>
<task-app><ui-icon name="copilot" w="28" h="26"></ui-icon></task-app>
<task-app open><ui-icon name="explorer" w="30" h="27"></ui-icon></task-app>
<task-app><ui-icon name="edge" w="30"></ui-icon></task-app>
<task-app open><ui-icon name="store" w="29"></ui-icon></task-app>
<task-app><ui-icon name="outlook" w="30" h="26"></ui-icon></task-app>
<task-app active><ui-icon name="chrome" w="30"></ui-icon><ui-icon slot="badge" name="train" w="20"></ui-icon></task-app>
<task-app><ui-icon name="youtube" w="30" h="22"></ui-icon></task-app>
<task-app open><ui-icon name="whatsapp" w="30"></ui-icon><b slot="badge">99+</b></task-app>
<task-app open><ui-icon name="vscode" w="30"></ui-icon></task-app>
<task-app open><ui-icon name="powershell" w="29" h="22"></ui-icon></task-app>
<task-app open><ui-icon name="openai" w="25"></ui-icon></task-app>
</div>
<div class="tray"><ui-icon name="up" w="14" h="8"></ui-icon><ui-icon class="g1" name="cloud" w="20" h="18"></ui-icon><ui-icon class="g2" name="mic" w="14" h="20"></ui-icon><div class="g2">ENG<br>IN</div><ui-icon class="g2" name="wifi" w="20" h="16"></ui-icon><ui-icon class="g3" name="volume" w="20" h="18"></ui-icon><ui-icon class="g3" name="battery" w="20" h="18"></ui-icon><div class="clock">15:29<br>02-08-2025</div></div>`);

define('desktop-shell', `:host{display:flex;flex-direction:column;height:100vh}`,
`<browser-chrome></browser-chrome><page-view></page-view><task-bar></task-bar>`);
</script>
</body>
</html>
